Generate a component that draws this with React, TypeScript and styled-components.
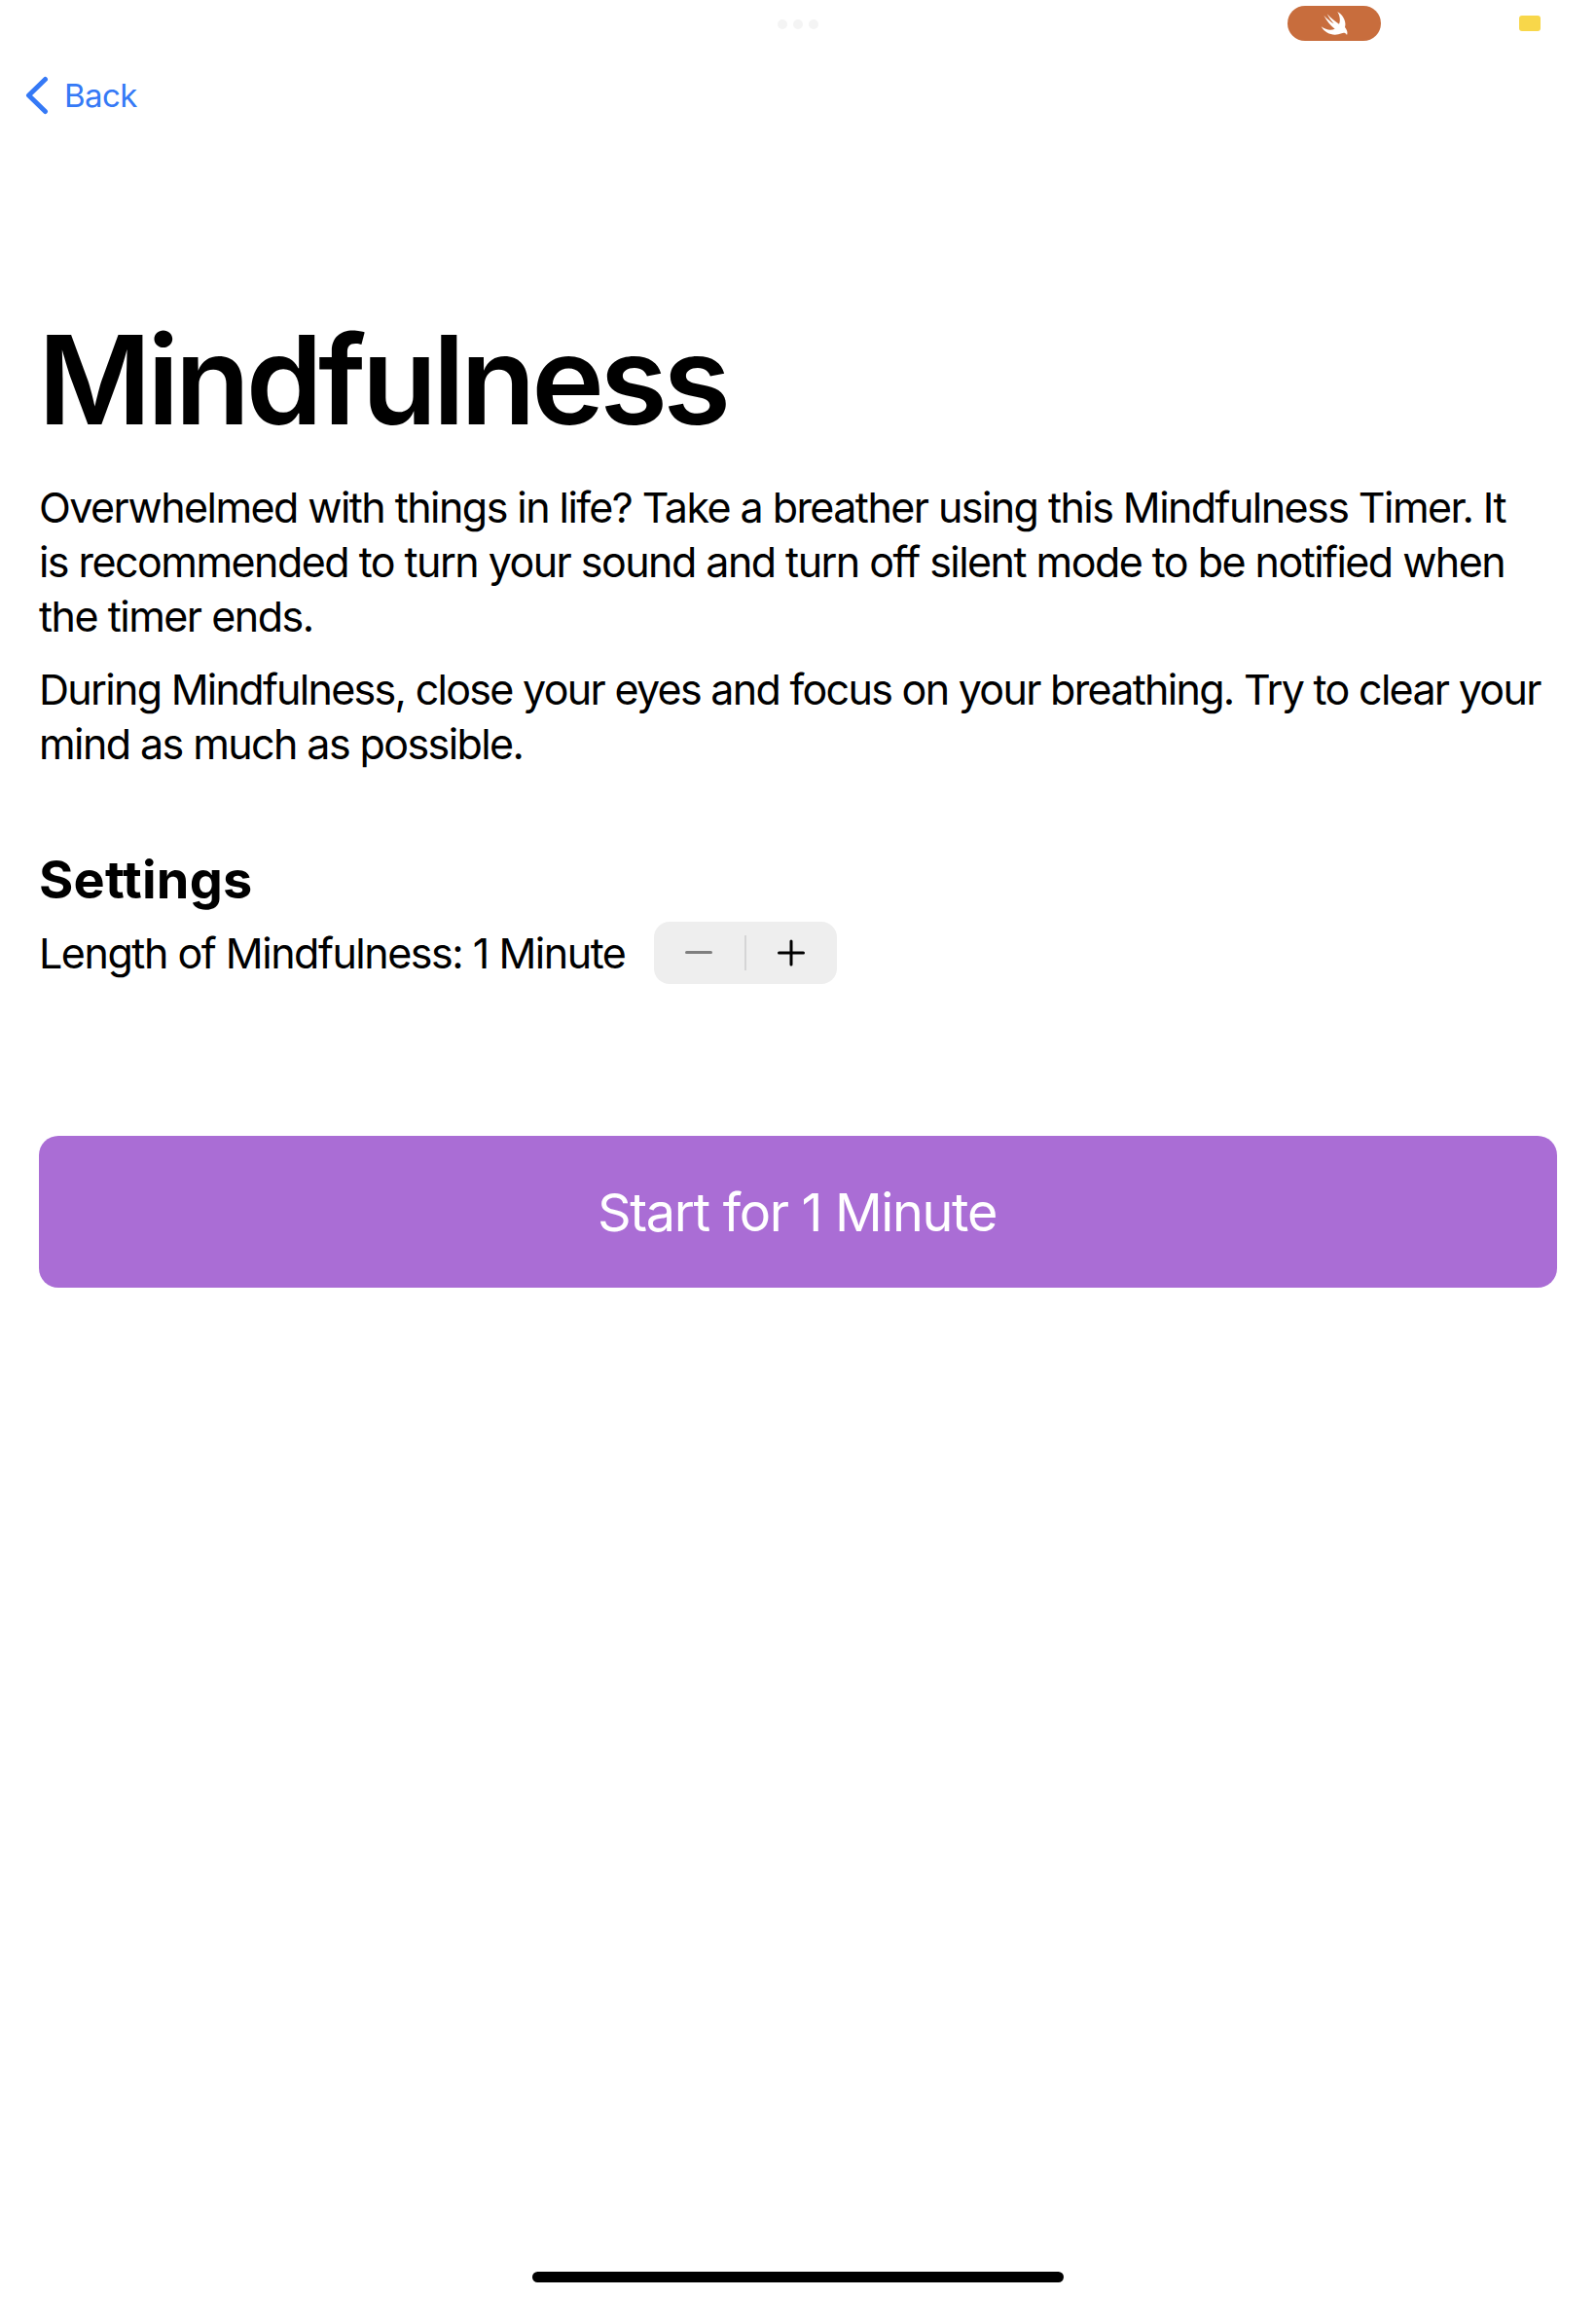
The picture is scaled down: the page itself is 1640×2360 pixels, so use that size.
import React, { useState } from "react";
import styled, { createGlobalStyle } from "styled-components";

const GlobalStyle = createGlobalStyle`
  *, *::before, *::after { box-sizing: border-box; }
  body { margin: 0; background: #fff; }
`;

const Screen = styled.div`
  width: 1640px;
  height: 2360px;
  display: flex;
  flex-direction: column;
  overflow: hidden;
  background: #fff;
  color: #000;
  font-family: Inter, "Liberation Sans", sans-serif;
`;

const StatusBar = styled.header`
  display: grid;
  grid-template-columns: 1fr auto 1fr;
  height: 48px;
  align-items: center;
`;

const Dots = styled.div`
  grid-column: 2;
  display: flex;
  gap: 6px;
  padding-top: 2px;
`;

const Dot = styled.i`
  width: 10px;
  height: 10px;
  border-radius: 50%;
  background: #f4f4f4;
`;

const Indicators = styled.div`
  display: flex;
  justify-content: flex-end;
  align-items: center;
  gap: 142px;
  padding-right: 57px;
`;

const SwiftPill = styled.div`
  display: flex;
  align-items: center;
  justify-content: center;
  width: 96px;
  height: 36px;
  border-radius: 18px;
  background: #c86d3d;
`;

const Battery = styled.i`
  width: 22px;
  height: 16px;
  border-radius: 3px;
  background: #f8d74a;
`;

const NavBar = styled.nav`
  display: flex;
  height: 100px;
  padding-left: 26px;
`;

const BackButton = styled.button`
  display: flex;
  align-items: center;
  gap: 16px;
  height: 100px;
  padding: 0;
  border: 0;
  background: none;
  color: #3579f6;
  font: 400 33px/40px Inter, "Liberation Sans", sans-serif;
  letter-spacing: -0.6px;
`;

const Main = styled.main`
  flex: 1;
  display: flex;
  flex-direction: column;
  padding: 166px 40px 0;
`;

const Title = styled.h1`
  margin: 0 0 27px -1px;
  font-size: 126.5px;
  font-weight: 600;
  line-height: 152px;
  letter-spacing: -4.5px;
`;

const Paragraph = styled.p`
  margin: 0 0 19px;
  font-size: 43px;
  line-height: 56px;
`;

const Line = styled.span<{ $tracking: number }>`
  display: block;
  white-space: nowrap;
  letter-spacing: ${(p) => p.$tracking}px;
`;

const SectionTitle = styled.h2`
  margin: 61px 0 11px;
  font-size: 54px;
  font-weight: 700;
  line-height: 64px;
  letter-spacing: 0.2px;
`;

const SettingRow = styled.div`
  display: flex;
  align-items: center;
  height: 64px;
`;

const SettingLabel = styled.span`
  width: 632px;
  font-size: 43px;
  line-height: 56px;
  letter-spacing: -1.47px;
  white-space: nowrap;
`;

const Stepper = styled.div`
  display: flex;
  align-items: center;
  width: 188px;
  height: 64px;
  border-radius: 16px;
  background: #eeeeee;
`;

const StepButton = styled.button<{ $muted?: boolean }>`
  flex: 1;
  display: flex;
  align-items: center;
  justify-content: center;
  height: 64px;
  padding: 0 2px 0 0;
  border: 0;
  background: none;
  color: ${(p) => (p.$muted ? "#7f7f7f" : "#000")};
`;

const Divider = styled.i`
  width: 2px;
  height: 36px;
  background: #d5d5d6;
`;

const StartButton = styled.button`
  height: 156px;
  margin-top: 156px;
  padding: 2px 2px 0 0;
  border: 0;
  border-radius: 20px;
  background: #aa6dd5;
  color: #fff;
  font: 400 54px/64px Inter, "Liberation Sans", sans-serif;
  letter-spacing: -1.37px;
`;

const HomeIndicator = styled.div`
  align-self: center;
  width: 546px;
  height: 11px;
  margin-bottom: 15px;
  border-radius: 5.5px;
  background: #000;
`;

const intro = [
  { text: "Overwhelmed with things in life? Take a breather using this Mindfulness Timer. It", tracking: -1.56 },
  { text: "is recommended to turn your sound and turn off silent mode to be notified when", tracking: -1.54 },
  { text: "the timer ends.", tracking: -1.5 },
];

const advice = [
  { text: "During Mindfulness, close your eyes and focus on your breathing. Try to clear your", tracking: -1.7 },
  { text: "mind as much as possible.", tracking: -1.59 },
];

const SwiftBird = () => (
  <svg width="28" height="26" viewBox="173 33 84 78" fill="#fff">
    <path d="M225 36C243 47 253 66 248 84C255 92 257 101 254 108C249 100 243 101 238 103C214 113 188 105 175 82C190 93 205 95 217 89C204 79 192 65 183 47C193 58 205 68 214 73C206 65 199 54 193 43C204 55 218 67 230 74C235 62 232 48 225 36Z" />
  </svg>
);

const Copy = ({ lines }: { lines: typeof intro }) => (
  <Paragraph>
    {lines.map((l) => (
      <Line key={l.text} $tracking={l.tracking}>{l.text}</Line>
    ))}
  </Paragraph>
);

export default function App() {
  const [minutes, setMinutes] = useState(1);
  const duration = `${minutes} Minute${minutes === 1 ? "" : "s"}`;

  return (
    <Screen>
      <GlobalStyle />
      <StatusBar>
        <Dots><Dot /><Dot /><Dot /></Dots>
        <Indicators>
          <SwiftPill><SwiftBird /></SwiftPill>
          <Battery />
        </Indicators>
      </StatusBar>
      <NavBar>
        <BackButton>
          <svg width="24" height="40" viewBox="0 0 24 40" fill="none" stroke="currentColor" strokeWidth="5" strokeLinecap="round" strokeLinejoin="round">
            <path d="M20.5 3.5L3.5 20L20.5 36.5" />
          </svg>
          Back
        </BackButton>
      </NavBar>
      <Main>
        <Title>Mindfulness</Title>
        <Copy lines={intro} />
        <Copy lines={advice} />
        <SectionTitle>Settings</SectionTitle>
        <SettingRow>
          <SettingLabel>Length of Mindfulness: {duration}</SettingLabel>
          <Stepper>
            <StepButton $muted={minutes === 1} aria-label="Decrease" onClick={() => setMinutes((m) => Math.max(1, m - 1))}>
              <svg width="28" height="28" viewBox="0 0 28 28" fill="none" stroke="currentColor" strokeWidth="3" strokeLinecap="round">
                <path d="M1.5 13.5H26.5" />
              </svg>
            </StepButton>
            <Divider />
            <StepButton aria-label="Increase" onClick={() => setMinutes((m) => m + 1)}>
              <svg width="28" height="28" viewBox="0 0 28 28" fill="none" stroke="currentColor" strokeWidth="3" strokeLinecap="round">
                <path d="M1.5 14H26.5M14 2V26" />
              </svg>
            </StepButton>
          </Stepper>
        </SettingRow>
        <StartButton>Start for {duration}</StartButton>
      </Main>
      <HomeIndicator />
    </Screen>
  );
}
